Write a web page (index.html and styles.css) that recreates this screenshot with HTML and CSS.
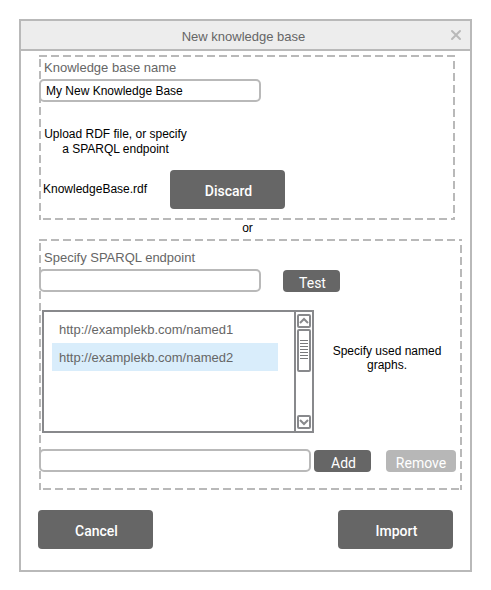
FILE: index.html
```html
<!DOCTYPE html>
<html lang="en">
<head>
<meta charset="utf-8">
<title>New knowledge base</title>
<link rel="stylesheet" href="styles.css">
</head>
<body>
<main class="dialog">
  <header class="titlebar">
    <h1 class="title">New knowledge base</h1>
    <button class="close" type="button" aria-label="Close">
      <svg width="12" height="12" viewBox="0 0 12 12"><path d="M2 2L10 10M10 2L2 10" fill="none" stroke="#b9b9b9" stroke-width="2" stroke-linecap="round"/></svg>
    </button>
  </header>
  <form class="content">
    <section class="group group-file">
      <label class="label" for="kb-name">Knowledge base name</label>
      <input class="field" id="kb-name" type="text" value="My New Knowledge Base">
      <p class="note upload-note">Upload RDF file, or specify<br>a SPARQL endpoint</p>
      <div class="file-row">
        <span class="note file-name">KnowledgeBase.rdf</span>
        <button class="button large" type="button">Discard</button>
      </div>
    </section>
    <p class="note or">or</p>
    <section class="group group-endpoint">
      <label class="label" for="endpoint">Specify SPARQL endpoint</label>
      <div class="endpoint-row">
        <input class="field" id="endpoint" type="text">
        <button class="button" type="button">Test</button>
      </div>
      <div class="graphs-row">
        <div class="listbox">
          <select class="graphs" id="graphs" size="4">
            <option>http://examplekb.com/named1</option>
            <option selected>http://examplekb.com/named2</option>
          </select>
          <svg class="scrollbar" width="20" height="123" viewBox="0 0 20 123" aria-hidden="true">
            <g fill="none" stroke="#88898c" stroke-width="2">
              <path d="M1 0V123M19 0V123M0 1H20M0 122H20"/>
              <rect x="4" y="5" width="12" height="12" rx="1"/>
              <path d="M6 13L10 9L14 13"/>
              <rect x="4" y="20" width="12" height="41" rx="1"/>
              <rect x="4" y="106" width="12" height="12" rx="1"/>
              <path d="M6 110L10 114L14 110"/>
            </g>
            <path d="M6 30.500H14M6 33.500H14M6 36.500H14M6 39.500H14M6 42.500H14M6 45.500H14M6 48.500H14" stroke="#77787b"/>
          </svg>
        </div>
        <label class="note graphs-note" for="graphs">Specify used named graphs.</label>
      </div>
      <div class="add-row">
        <input class="field wide" type="text" aria-label="Named graph">
        <button class="button" type="button">Add</button>
        <button class="button remove" type="button" disabled>Remove</button>
      </div>
    </section>
    <footer class="actions">
      <button class="button large" type="button">Cancel</button>
      <button class="button large" type="button">Import</button>
    </footer>
  </form>
</main>
</body>
</html>
```

FILE: styles.css
```css
* { box-sizing: border-box; }

body {
  margin: 0;
  padding: 19px;
  background: #fff;
  font-family: "Liberation Sans", Arial, sans-serif;
  font-size: 12px;
  color: #000;
}

p, h1 { margin: 0; }

.dialog { border: 2px solid #b9b9b9; background: #fff; }

.titlebar {
  display: grid;
  grid-template-columns: 16px 1fr 20px;
  align-items: center;
  height: 30px;
  border-bottom: 2px solid #b9b9b9;
  background: #ededed;
}

.title {
  grid-column: 2;
  padding-top: 4px;
  font-size: 13px;
  font-weight: 400;
  line-height: 16px;
  text-align: center;
  color: #666;
}

.close {
  display: flex;
  padding: 0;
  border: 0;
  background: none;
}

.content { padding: 4px 8px 21px 18px; }

.group {
  --across: repeating-linear-gradient(90deg, #b9b9b9 0 8px, transparent 8px 12px);
  --down: repeating-linear-gradient(#b9b9b9 0 8px, transparent 8px 12px);
  background:
    var(--across) left 0 top 0 / 12px 2px repeat-x,
    var(--across) left 4px bottom 0 / 12px 2px repeat-x,
    var(--down) left 0 top 4px / 2px 12px repeat-y,
    var(--down) right 0 top 6px / 2px 12px repeat-y;
}

.group-file { margin-right: 7px; padding: 5px 0 11px; }

.group-endpoint { padding: 11px 0 18px; }

.label {
  display: block;
  margin-bottom: 3px;
  padding-left: 5px;
  font-size: 13px;
  line-height: 16px;
  color: #666;
}

.field {
  display: block;
  width: 222px;
  height: 23px;
  padding: 0 5px;
  border: 2px solid #b9b9b9;
  border-radius: 5px;
  background: #fff;
  font: inherit;
  color: #000;
}

.wide { flex: 1; }

.note { font-size: 12px; line-height: 15px; }

.upload-note {
  width: 153px;
  margin-top: 25px;
  text-align: center;
}

.file-row {
  display: flex;
  align-items: center;
  margin-top: 13px;
  padding-left: 4px;
}

.file-name { width: 127px; }

.or { height: 19px; padding: 1px 6px 0 0; text-align: center; }

.button {
  width: 57px;
  height: 22px;
  padding: 5px 0 0 2px;
  border: 0;
  border-radius: 4px;
  background: #666;
  font-family: Roboto, sans-serif;
  font-size: 14px;
  line-height: 17px;
  color: #fff;
}

.large { width: 115px; height: 39px; padding-top: 4px; font-weight: 500; }

.remove { width: 70px; padding-left: 0; margin-left: 12px; background: #b7b7b7; }

.endpoint-row { display: flex; align-items: center; gap: 22px; }

.graphs-row {
  display: flex;
  margin-top: 18px;
  padding-left: 3px;
}

.listbox { display: flex; width: 272px; border-left: 2px solid #88898c; }

.graphs {
  flex: 1;
  min-width: 0;
  height: 123px;
  padding: 3px 16px 0 8px;
  border: solid #88898c;
  border-width: 2px 0;
  border-radius: 0;
  background: #fff;
  font: 13px "Liberation Sans", Arial, sans-serif;
  overflow: hidden;
  outline: 0;
}

.graphs option {
  height: 28px;
  padding: 7px 7px 0;
  color: #666;
}

.graphs option:checked {
  background: linear-gradient(#d9edfb, #d9edfb);
  color: #666;
}

.scrollbar { flex: none; display: block; }

.graphs-note {
  flex: 1;
  padding: 34px 16px 0 14px;
  line-height: 14px;
  text-align: center;
}

.add-row {
  display: flex;
  align-items: center;
  gap: 3px;
  margin-top: 16px;
  padding-right: 6px;
}

.actions {
  display: flex;
  justify-content: space-between;
  margin: 20px 9px 0 -1px;
}
```
